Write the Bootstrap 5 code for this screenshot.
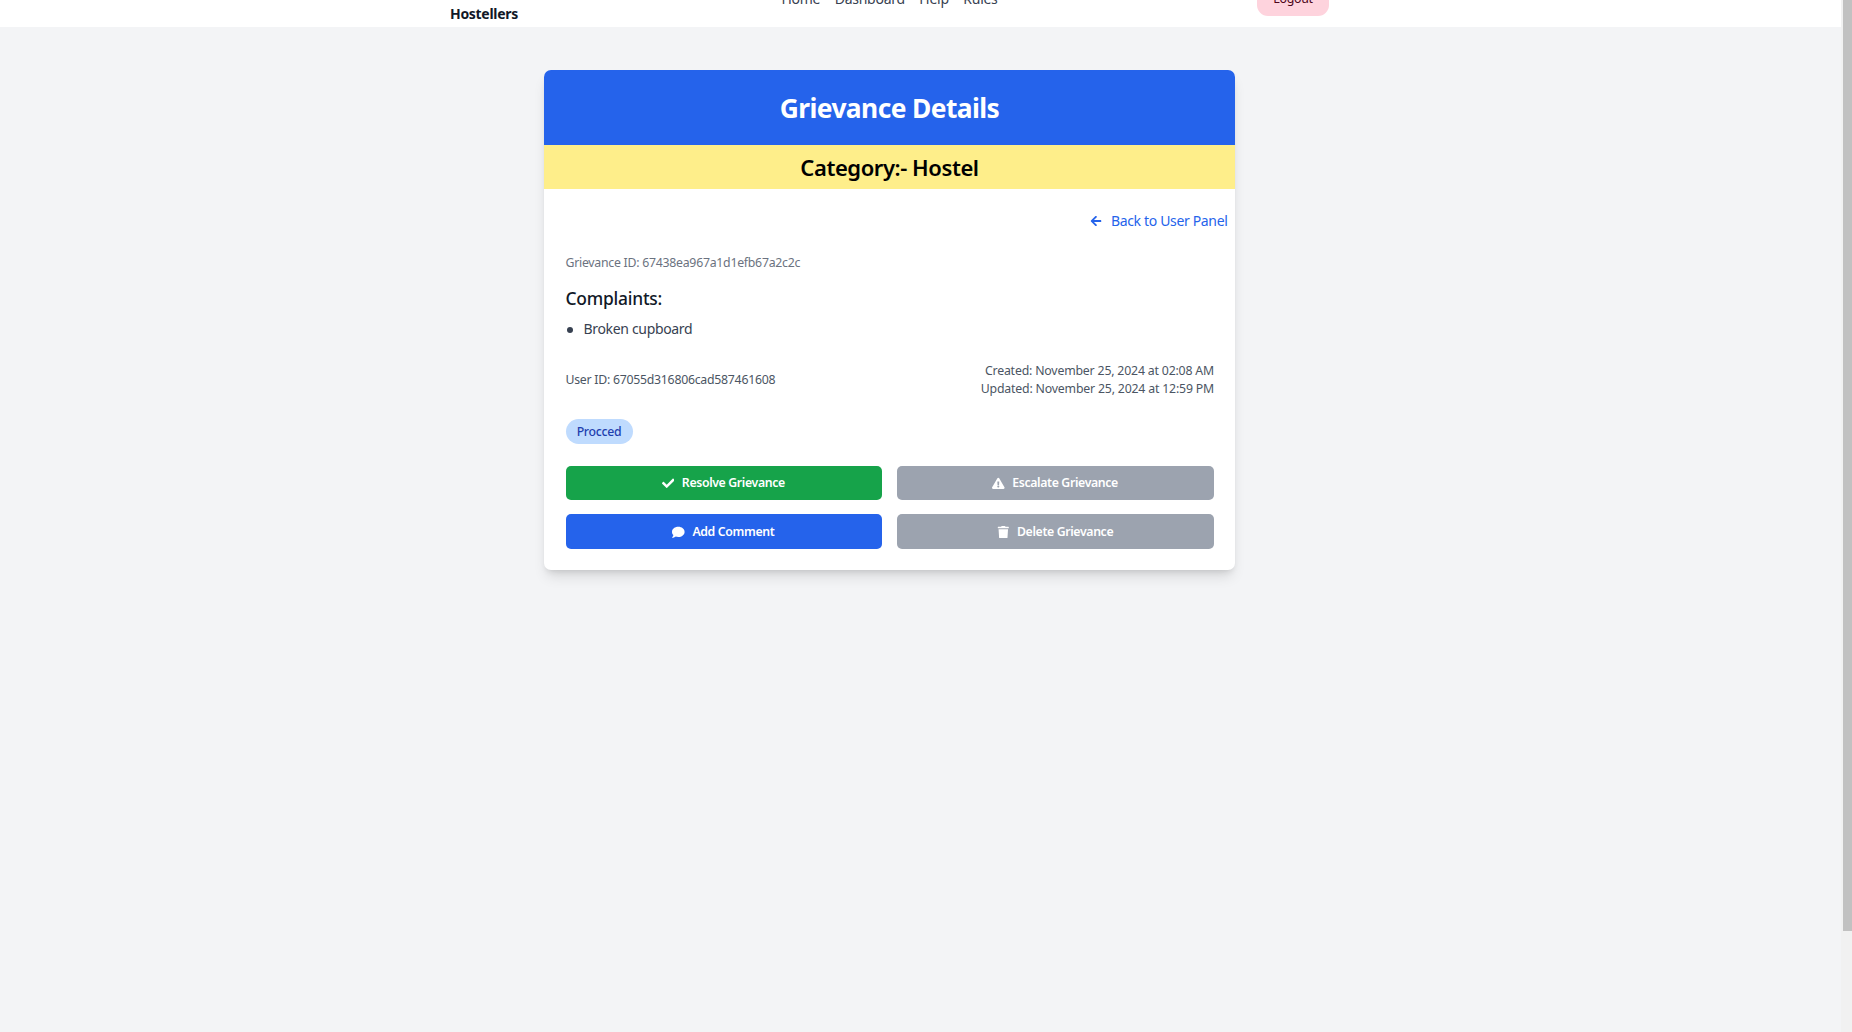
<!DOCTYPE html>
<html lang="en">
<head>
<meta charset="utf-8">
<meta name="viewport" content="width=device-width, initial-scale=1">
<title>Grievance Details</title>
<link rel="stylesheet" href="https://cdn.jsdelivr.net/npm/bootstrap@5.3.0/dist/css/bootstrap.min.css">
<style>
body{font-family:"Noto Sans",sans-serif;background:#f3f4f6;color:#111827;overflow:hidden}
.shell{height:1032px}
.page-side{width:1841px}
.centred{margin-right:62px}
.top-nav{height:27px;background:#fff;overflow:hidden}
.nav-inner{width:879px;height:27px}
.brand-box{width:72px;font-size:14px;line-height:20px;font-weight:700;letter-spacing:-.3px;margin-bottom:3px}
.nav-links{gap:14.6px;font-size:14px;line-height:20px;margin-bottom:18.5px;color:#374151;letter-spacing:-.28px}
.nav-links a{color:inherit}
.logout{width:72px;height:36px;margin-bottom:11px;border-radius:11px;background:#fed3dd;color:#4c0519;font-size:12.4px;letter-spacing:-.3px;border:0;padding:2px 0 0}
.panel{width:691px;margin-top:43px;border-radius:7px;background:#fff;overflow:hidden;box-shadow:0 9px 14px -3px rgba(0,0,0,.12),0 4px 6px -3px rgba(0,0,0,.12)}
.panel-head{height:75px;padding-top:2px;background:#2563eb;color:#fff;font-size:26.4px;font-weight:700;letter-spacing:-.6px}
.panel-sub{height:44px;background:#feee8a;color:#000;font-size:22px;font-weight:600;letter-spacing:-.43px}
.back{margin-top:20px;padding-right:7.5px;height:22px;font-size:14px;letter-spacing:-.34px}
.back a{color:#2563eb;gap:8.6px}
.back svg{width:12px;height:12px;margin-top:1px}
.details{padding:23px 21px 21px 21.5px}
.fine{font-size:12.3px;line-height:18px;letter-spacing:-.26px}
.gray-a{color:#6b7280}
.gray-b{color:#4b5563}
.issues-title{font-size:17.4px;line-height:26px;font-weight:500;letter-spacing:-.22px;margin:13px 0 7px}
.issues{list-style:none;margin:0 0 22px;padding:0;font-size:14px;line-height:22px;letter-spacing:-.33px;color:#374151}
.issues li::before{content:"";width:6px;height:6px;border-radius:50%;background:#374151;margin:1px 11px 0 1px}
.stamps{letter-spacing:-.18px}
.state{margin:21px 0 22px;padding-top:2px;width:67px;height:25px;background:#bfdbfe;color:#1e40af;font-size:12.3px;font-weight:500;letter-spacing:-.3px}
.actions{display:grid;grid-template-columns:1fr 1fr;grid-template-rows:34px 35px;gap:14px 15px}
.act{border:0;border-radius:5px;padding:1px 1px 0 0;color:#fff;font-size:12.3px;font-weight:600;letter-spacing:-.36px;gap:7.4px}
.act svg{width:12.6px;height:12.6px}
.act-low span{padding-top:1px}
.act-green{background:#16a34a}
.act-blue{background:#2563eb}
.act-gray{background:#9ca3af}
.scroll-track{width:11px;background:#f1f1f1;padding-left:2px}
.scroll-thumb{height:931px;background:#c1c1c1}
</style>
</head>
<body>
<div class="shell d-flex">
  <div class="page-side">
    <nav class="top-nav">
      <div class="centred d-flex justify-content-center">
        <div class="nav-inner d-flex justify-content-between align-items-end">
          <div class="brand-box">Hostellers</div>
          <div class="nav-links d-flex">
            <a href="#" class="text-decoration-none">Home</a>
            <a href="#" class="text-decoration-none">Dashboard</a>
            <a href="#" class="text-decoration-none">Help</a>
            <a href="#" class="text-decoration-none">Rules</a>
          </div>
          <button type="button" class="logout">Logout</button>
        </div>
      </div>
    </nav>
    <main class="centred d-flex justify-content-center">
      <section class="panel">
        <div class="panel-head d-flex align-items-center justify-content-center">Grievance Details</div>
        <div class="panel-sub d-flex align-items-center justify-content-center">Category:- Hostel</div>
        <div class="back d-flex justify-content-end align-items-center">
          <a href="#" class="d-flex align-items-center text-decoration-none">
            <svg viewBox="0 0 448 512" fill="currentColor"><path d="M257.5 445.1l-22.2 22.2c-9.4 9.4-24.6 9.4-33.9 0L7 273c-9.4-9.4-9.4-24.6 0-33.9L201.4 44.7c9.4-9.4 24.6-9.4 33.9 0l22.2 22.2c9.5 9.5 9.3 25-.4 34.3L136.6 216H424c13.3 0 24 10.7 24 24v32c0 13.3-10.7 24-24 24H136.6l120.5 114.8c9.8 9.3 10 24.8.4 34.3z"/></svg>
            <span>Back to User Panel</span>
          </a>
        </div>
        <div class="details">
          <div class="fine gray-a">Grievance ID: 67438ea967a1d1efb67a2c2c</div>
          <h3 class="issues-title">Complaints:</h3>
          <ul class="issues">
            <li class="d-flex align-items-center">Broken cupboard</li>
          </ul>
          <div class="fine gray-b d-flex justify-content-between align-items-center">
            <div>User ID: 67055d316806cad587461608</div>
            <div class="stamps text-end">
              <div>Created: November 25, 2024 at 02:08 AM</div>
              <div>Updated: November 25, 2024 at 12:59 PM</div>
            </div>
          </div>
          <div class="state rounded-pill d-flex align-items-center justify-content-center">Procced</div>
          <div class="actions">
            <button type="button" class="act act-green d-flex align-items-center justify-content-center">
              <svg viewBox="0 0 512 512" fill="currentColor"><path d="M173.898 439.404l-166.4-166.4c-9.997-9.997-9.997-26.206 0-36.204l36.203-36.204c9.997-9.998 26.207-9.998 36.204 0L192 312.69 432.095 72.596c9.997-9.997 26.207-9.997 36.204 0l36.203 36.204c9.997 9.997 9.997 26.206 0 36.204l-294.4 294.401c-9.998 9.997-26.207 9.997-36.204-.001z"/></svg>
              <span>Resolve Grievance</span>
            </button>
            <button type="button" class="act act-gray d-flex align-items-center justify-content-center">
              <svg viewBox="0 0 576 512" fill="currentColor"><path d="M569.517 440.013C587.975 472.007 564.806 512 527.94 512H48.054c-36.937 0-59.999-40.055-41.577-71.987L246.423 23.985c18.467-32.009 64.72-31.951 83.154 0l239.94 416.028zM288 354c-25.405 0-46 20.595-46 46s20.595 46 46 46 46-20.595 46-46-20.595-46-46-46zm-43.673-165.346l7.418 136c.347 6.364 5.609 11.346 11.982 11.346h48.546c6.373 0 11.635-4.982 11.982-11.346l7.418-136c.375-6.874-5.098-12.654-11.982-12.654h-63.383c-6.884 0-12.356 5.78-11.981 12.654z"/></svg>
              <span>Escalate Grievance</span>
            </button>
            <button type="button" class="act act-low act-blue d-flex align-items-center justify-content-center">
              <svg viewBox="0 0 512 512" fill="currentColor"><path d="M256 32C114.6 32 0 125.1 0 240c0 49.6 21.4 95 57 130.7C44.5 421.1 2.7 466 2.2 466.5c-2.2 2.3-2.8 5.7-1.5 8.7S4.8 480 8 480c66.3 0 116-31.8 140.6-51.4 32.7 12.3 69 19.4 107.4 19.4 141.4 0 256-93.1 256-208S397.4 32 256 32z"/></svg>
              <span>Add Comment</span>
            </button>
            <button type="button" class="act act-low act-gray d-flex align-items-center justify-content-center">
              <svg viewBox="0 0 448 512" fill="currentColor"><path d="M432 32H312l-9.4-18.7A24 24 0 0 0 281.1 0H166.8a23.72 23.72 0 0 0-21.4 13.3L136 32H16A16 16 0 0 0 0 48v32a16 16 0 0 0 16 16h416a16 16 0 0 0 16-16V48a16 16 0 0 0-16-16zM53.2 467a48 48 0 0 0 47.9 45h245.8a48 48 0 0 0 47.9-45L416 128H32z"/></svg>
              <span>Delete Grievance</span>
            </button>
          </div>
        </div>
      </section>
    </main>
  </div>
  <div class="scroll-track"><div class="scroll-thumb"></div></div>
</div>
<script src="https://cdn.jsdelivr.net/npm/bootstrap@5.3.0/dist/js/bootstrap.bundle.min.js"></script>
</body>
</html>
